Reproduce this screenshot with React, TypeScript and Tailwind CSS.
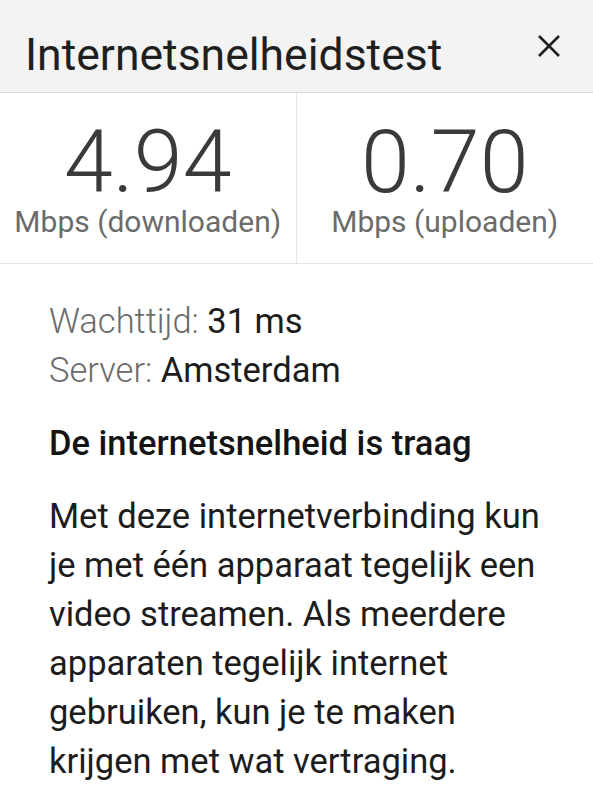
import React from "react";

const lines = [
  "Met deze internetverbinding kun",
  "je met één apparaat tegelijk een",
  "video streamen. Als meerdere",
  "apparaten tegelijk internet",
  "gebruiken, kun je te maken",
  "krijgen met wat vertraging.",
];

function Stat({ value, label }: { value: string; label: string }) {
  return (
    <div className="flex flex-col items-center">
      <span className="text-[88px] leading-[80px] font-light text-[#3a3a3a]">{value}</span>
      <span className="mt-[2px] text-[30px] leading-[36px] text-[#6b6b6b]">{label}</span>
    </div>
  );
}

export default function App() {
  return (
    <div className="min-h-screen w-full bg-white font-['Roboto',sans-serif]">
      <header className="flex h-[93px] items-start justify-between border-b border-[#d9d9d9] bg-[#f3f3f3] pl-[25px] pr-[32px] pt-[29px]">
        <h1 className="text-[44.5px] leading-[52px] font-normal text-[#1f1f1f]">Internetsnelheidstest</h1>
        <button aria-label="Sluiten" className="mt-[5px] flex h-[24px] w-[24px] items-center justify-center">
          <svg width="22" height="22" viewBox="0 0 22 22" fill="none" stroke="#1f1f1f" strokeWidth="2.6">
            <path d="M1 1 L21 21 M21 1 L1 21" />
          </svg>
        </button>
      </header>

      <div className="grid grid-cols-2 border-b border-[#e6e6e6]">
        <div className="border-r border-[#e6e6e6] pt-[29px] pb-[23px]">
          <Stat value="4.94" label="Mbps (downloaden)" />
        </div>
        <div className="pt-[29px] pb-[23px]">
          <Stat value="0.70" label="Mbps (uploaden)" />
        </div>
      </div>

      <div className="pl-[49px] pr-[20px] pt-[33px]">
        <div className="text-[34.5px] leading-[49px]">
          <p>
            <span className="font-light text-[#6b6b6b]">Wachttijd: </span>
            <span className="text-[#1c1c1c]">31 ms</span>
          </p>
          <p>
            <span className="font-light text-[#6b6b6b]">Server: </span>
            <span className="text-[#1c1c1c]">Amsterdam</span>
          </p>
        </div>

        <h2 className="mt-[26px] text-[34.5px] leading-[44px] font-medium text-[#141414]">
          De internetsnelheid is traag
        </h2>

        <p className="mt-[27px] text-[34.5px] leading-[49px] text-[#1c1c1c]">
          {lines.map((l) => (
            <span key={l} className="block whitespace-nowrap">
              {l}
            </span>
          ))}
        </p>
      </div>
    </div>
  );
}
